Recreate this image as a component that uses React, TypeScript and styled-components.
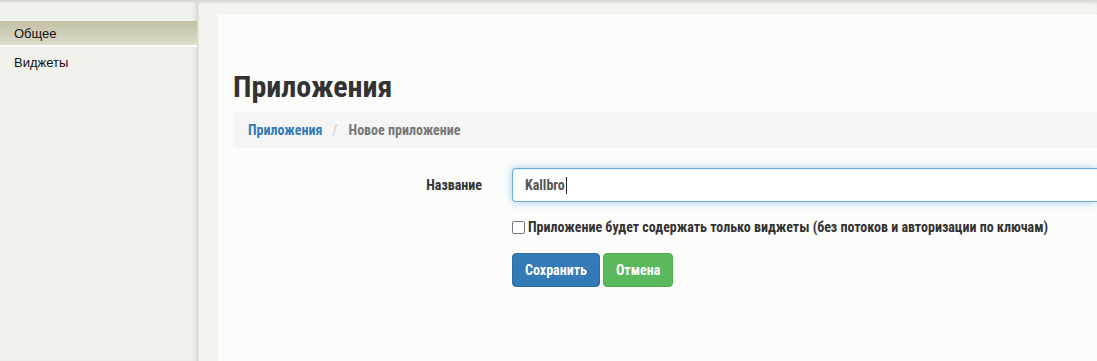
import React from "react";
import styled, { createGlobalStyle } from "styled-components";

const Global = createGlobalStyle`
  html, body { margin: 0; padding: 0; }
  body {
    background: #f4f3ef;
    font-family: Roboto, "Liberation Sans", Arial, sans-serif;
    font-stretch: 84%;
    overflow: hidden;
  }
  * { box-sizing: border-box; }
`;

const Page = styled.div`
  display: flex;
  width: 1097px;
  height: 361px;
  border-top: 2px solid #d8d8d4;
  box-shadow: inset 0 2px 2px rgba(0,0,0,0.06);
  overflow: hidden;
`;

const Sidebar = styled.nav`
  width: 199px;
  flex: none;
  background: #f1f1ec;
  box-shadow: inset -5px 0 5px -3px rgba(0,0,0,0.12);
  border-right: 1px solid #e2e2dc;
  padding-top: 19px;
  font-family: "Liberation Sans", Arial, sans-serif;
  font-stretch: 100%;
  font-size: 13px;
  color: #111;
`;

const NavItem = styled.div<{ $active?: boolean }>`
  height: ${p => (p.$active ? "26px" : "28px")};
  line-height: ${p => (p.$active ? "26px" : "28px")};
  padding-left: 14px;
  margin-right: 1px;
  background: ${p => (p.$active ? "linear-gradient(#c2c0a4, #dedccb)" : "transparent")};
  border-bottom: ${p => (p.$active ? "2px solid #fff" : "none")};
  margin-top: ${p => (p.$active ? "0" : "2px")};
`;

const Main = styled.main`
  flex: 1;
  padding: 13px 0 0 19px;
  display: flex;
`;

const Panel = styled.section`
  flex: 1;
  background: #fcfcfa;
  padding: 52px 0 0 15px;
  color: #333;
`;

const Title = styled.h1`
  margin: 0 0 5px;
  font-size: 30px;
  font-weight: bold;
  line-height: 40px;
  color: #333;
`;

const Breadcrumb = styled.ol`
  list-style: none;
  margin: 0 0 20px;
  padding: 0 15px;
  height: 36px;
  display: flex;
  align-items: center;
  background: #f5f5f5;
  border-radius: 4px 0 0 4px;
  font-size: 14px;
  font-weight: bold;
`;

const Crumb = styled.li<{ $active?: boolean }>`
  color: ${p => (p.$active ? "#777" : "#337ab7")};
  &:not(:first-child)::before {
    content: "/";
    color: #ccc;
    padding: 0 11px 0 10px;
    font-weight: normal;
  }
`;

const FormRow = styled.div<{ $gap?: number }>`
  display: grid;
  grid-template-columns: 249px 1fr;
  column-gap: 30px;
  align-items: center;
  margin-bottom: ${p => p.$gap ?? 17}px;
`;

const Label = styled.label`
  text-align: right;
  font-size: 14px;
  font-weight: bold;
  color: #333;
`;

const Input = styled.div`
  height: 34px;
  border: 1px solid #66afe9;
  border-right: none;
  border-radius: 4px 0 0 4px;
  background: #fff;
  box-shadow: inset 0 1px 1px rgba(0,0,0,0.075), 0 0 8px rgba(102,175,233,0.6);
  padding: 0 12px;
  display: flex;
  align-items: center;
  font-size: 14px;
  font-weight: bold;
  color: #555;
`;

const Caret = styled.span`
  display: inline-block;
  width: 1px;
  height: 17px;
  background: #222;
  margin-left: 1px;
`;

const Check = styled.label`
  grid-column: 2;
  display: flex;
  align-items: center;
  gap: 3px;
  font-size: 14px;
  font-weight: bold;
  color: #333;
`;

const Box = styled.span`
  width: 13px;
  height: 13px;
  border: 1px solid #767676;
  border-radius: 2px;
  background: #fff;
  flex: none;
`;

const Buttons = styled.div`
  grid-column: 2;
  display: flex;
  gap: 3px;
`;

const Button = styled.button<{ $variant: "primary" | "success" }>`
  height: 34px;
  padding: 0 12px;
  border-radius: 4px;
  border: 1px solid ${p => (p.$variant === "primary" ? "#2e6da4" : "#4cae4c")};
  background: ${p => (p.$variant === "primary" ? "#337ab7" : "#5cb85c")};
  color: #fff;
  font-family: inherit;
  font-stretch: inherit;
  font-size: 14px;
  font-weight: bold;
`;

export default function App() {
  return (
    <>
      <Global />
      <Page>
        <Sidebar>
          <NavItem $active>Общее</NavItem>
          <NavItem>Виджеты</NavItem>
        </Sidebar>
        <Main>
          <Panel>
            <Title>Приложения</Title>
            <Breadcrumb>
              <Crumb>Приложения</Crumb>
              <Crumb $active>Новое приложение</Crumb>
            </Breadcrumb>
            <FormRow>
              <Label>Название</Label>
              <Input>
                Kallbro
                <Caret />
              </Input>
            </FormRow>
            <FormRow $gap={18}>
              <Check>
                <Box />
                Приложение будет содержать только виджеты (без потоков и авторизации по ключам)
              </Check>
            </FormRow>
            <FormRow>
              <Buttons>
                <Button $variant="primary">Сохранить</Button>
                <Button $variant="success">Отмена</Button>
              </Buttons>
            </FormRow>
          </Panel>
        </Main>
      </Page>
    </>
  );
}
